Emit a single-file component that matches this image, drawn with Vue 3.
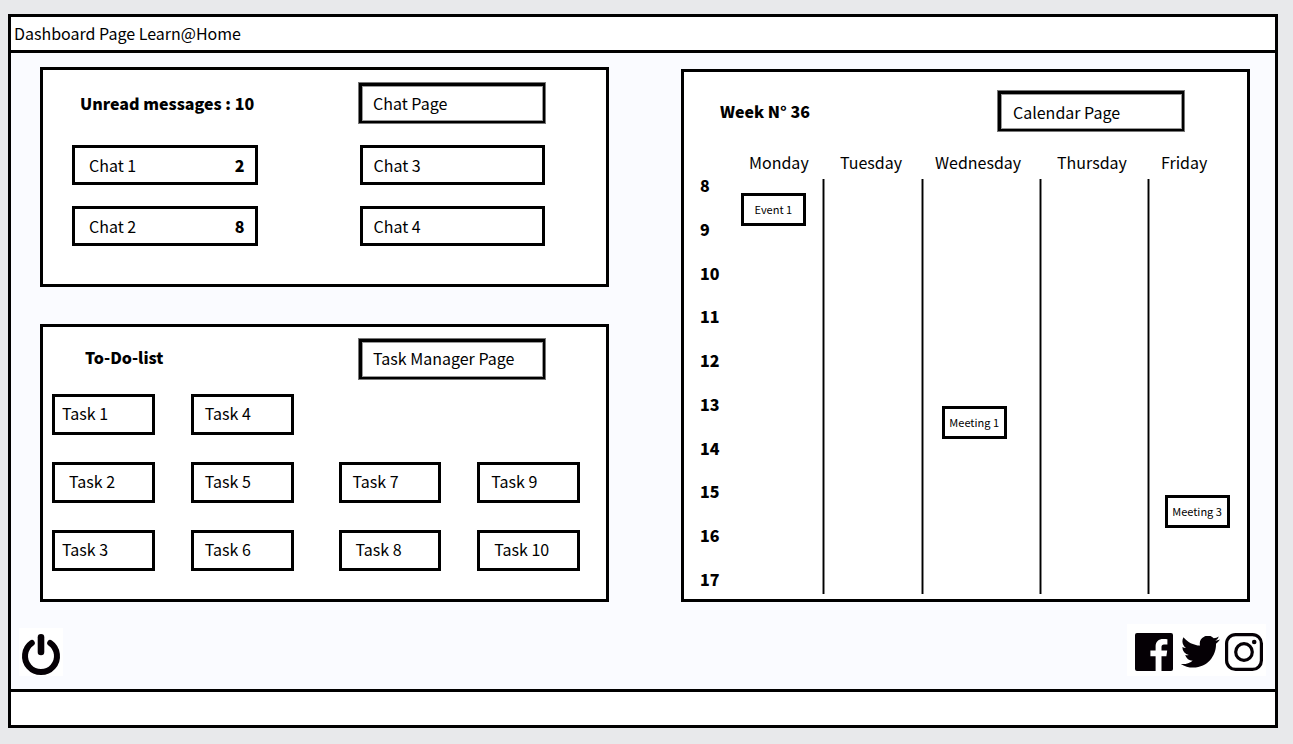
<script setup>
const chats = [
  { name: 'Chat 1', unread: 2 },
  { name: 'Chat 3' },
  { name: 'Chat 2', unread: 8 },
  { name: 'Chat 4' },
]

const taskColumns = [
  [
    { name: 'Task 1', inset: 'near' },
    { name: 'Task 2', inset: 'far' },
    { name: 'Task 3', inset: 'near' },
  ],
  [
    { name: 'Task 4', inset: 'mid' },
    { name: 'Task 5', inset: 'mid' },
    { name: 'Task 6', inset: 'mid' },
  ],
  [
    { name: 'Task 7', inset: 'mid' },
    { name: 'Task 8', inset: 'far' },
  ],
  [
    { name: 'Task 9', inset: 'mid' },
    { name: 'Task 10', inset: 'far' },
  ],
]

const days = ['Monday', 'Tuesday', 'Wednesday', 'Thursday', 'Friday']
const hours = [8, 9, 10, 11, 12, 13, 14, 15, 16, 17]

// start: distance in pixels below the beginning of the hour
const events = [
  { name: 'Event 1', day: 'Monday', hour: 8, start: 14 },
  { name: 'Meeting 1', day: 'Wednesday', hour: 13, start: 8 },
  { name: 'Meeting 3', day: 'Friday', hour: 15, start: 10 },
]

const eventsAt = (day, hour) => events.filter((e) => e.day === day && e.hour === hour)
</script>

<template>
  <div class="page">
    <div class="frame">
      <header class="top-bar">
        <h1>Dashboard Page Learn@Home</h1>
      </header>

      <main class="content">
        <div class="panels">
          <div class="left">
            <section class="panel chat-panel">
              <div class="panel-head">
                <h2>Unread messages : 10</h2>
                <button type="button" class="page-button">Chat Page</button>
              </div>
              <ul class="chats">
                <li v-for="chat in chats" :key="chat.name">
                  <button type="button" class="box chat" :class="{ unread: chat.unread }">
                    <span>{{ chat.name }}</span>
                    <strong v-if="chat.unread">{{ chat.unread }}</strong>
                  </button>
                </li>
              </ul>
            </section>

            <section class="panel todo-panel">
              <div class="panel-head">
                <h2>To-Do-list</h2>
                <button type="button" class="page-button">Task Manager Page</button>
              </div>
              <div class="tasks">
                <ul v-for="(column, i) in taskColumns" :key="i" class="task-column">
                  <li v-for="task in column" :key="task.name">
                    <button type="button" class="box task" :class="task.inset">{{ task.name }}</button>
                  </li>
                </ul>
              </div>
            </section>
          </div>

          <section class="panel calendar-panel">
            <div class="panel-head">
              <h2>Week N° 36</h2>
              <button type="button" class="page-button">Calendar Page</button>
            </div>
            <table class="calendar">
              <colgroup>
                <col class="col-hour" />
                <col class="col-mon" />
                <col class="col-tue" />
                <col class="col-wed" />
                <col class="col-thu" />
                <col class="col-fri" />
              </colgroup>
              <thead>
                <tr>
                  <td></td>
                  <th v-for="day in days" :key="day" scope="col">{{ day }}</th>
                </tr>
              </thead>
              <tbody>
                <tr v-for="hour in hours" :key="hour">
                  <th scope="row">{{ hour }}</th>
                  <td v-for="day in days" :key="day">
                    <button
                      v-for="event in eventsAt(day, hour)"
                      :key="event.name"
                      type="button"
                      class="box event"
                      :style="{ top: event.start + 'px' }"
                    >{{ event.name }}</button>
                  </td>
                </tr>
              </tbody>
            </table>
          </section>
        </div>

        <div class="actions">
          <button type="button" class="power" aria-label="Log out">
            <svg viewBox="0 0 44 48" width="44" height="48" fill="none" stroke="#050005" stroke-linecap="round">
              <path d="M12.8 15 A16 16 0 1 0 31.2 15" stroke-width="6" />
              <path d="M22 9.2 V24" stroke-width="6.6" />
            </svg>
          </button>
          <nav class="social" aria-label="Social networks">
            <a href="#" aria-label="Facebook">
              <svg viewBox="0 0 38 38" width="38" height="38">
                <path
                  fill="#050005"
                  d="M2 0 H36 Q38 0 38 2 V36 Q38 38 36 38 H26.5 V23.2 H31.4 L32.2 17.6 H26.5 V14 C26.5 12.3 27.2 11.4 29 11.4 H32.4 V6.3 C31.4 6.1 30 6 28.2 6 C23.6 6 20.6 8.6 20.6 13.4 V17.6 H15.4 V23.2 H20.6 V38 H2 Q0 38 0 36 V2 Q0 0 2 0 Z"
                />
              </svg>
            </a>
            <a href="#" aria-label="Twitter">
              <svg viewBox="0 2.4 24 19.6" width="42" height="32" preserveAspectRatio="xMaxYMid meet">
                <path
                  fill="#050005"
                  d="M23.95 4.57a10 10 0 0 1-2.82.78 4.96 4.96 0 0 0 2.16-2.72c-.95.55-2 .96-3.13 1.18a4.92 4.92 0 0 0-8.38 4.48C7.69 8.1 4.07 6.13 1.64 3.16a4.82 4.82 0 0 0-.67 2.48c0 1.71.87 3.21 2.19 4.1a4.9 4.9 0 0 1-2.23-.62v.06a4.92 4.92 0 0 0 3.95 4.83 5 5 0 0 1-2.21.08 4.94 4.94 0 0 0 4.6 3.42A9.87 9.87 0 0 1 0 19.54a13.99 13.99 0 0 0 7.55 2.21c9.05 0 14-7.5 14-13.98 0-.21 0-.42-.02-.63a9.94 9.94 0 0 0 2.46-2.55z"
                />
              </svg>
            </a>
            <a href="#" aria-label="Instagram">
              <svg viewBox="0 0 38 38" width="38" height="38" fill="none" stroke="#050005">
                <rect x="1.6" y="1.6" width="34.8" height="34.8" rx="9" stroke-width="3.2" />
                <circle cx="19" cy="19" r="8.3" stroke-width="3.2" />
                <circle cx="29.2" cy="9" r="2.3" fill="#050005" stroke="none" />
              </svg>
            </a>
          </nav>
        </div>
      </main>

      <footer class="bottom-bar"></footer>
    </div>
  </div>
</template>

<style>
body {
  margin: 0;
  background: #e8e9eb;
}
</style>

<style scoped>
.page {
  box-sizing: border-box;
  display: flex;
  min-height: 100vh;
  padding: 14px 15px 16px 8px;
  background: #e8e9eb;
  color: #000;
  font-family: "Noto Sans CJK SC", "Noto Sans", sans-serif;
  font-size: 16px;
  line-height: 24px;
}

.page *,
.page *::before {
  box-sizing: border-box;
}

h1,
h2,
ul {
  margin: 0;
  padding: 0;
  font-size: inherit;
  list-style: none;
}

button {
  margin: 0;
  font: inherit;
  color: inherit;
  text-align: left;
  background: #fff;
  cursor: pointer;
}

.frame {
  flex: 1;
  display: flex;
  flex-direction: column;
  border: 3px solid #000;
}

.top-bar {
  display: flex;
  align-items: center;
  min-height: 36px;
  padding: 0 3px 2px;
  background: #fff;
  border-bottom: 3px solid #000;
}

.top-bar h1 {
  font-weight: 400;
}

.bottom-bar {
  min-height: 36px;
  background: #fff;
  border-top: 3px solid #000;
}

.content {
  flex: 1;
  display: flex;
  flex-direction: column;
  background: #fafbff;
}

.panels {
  display: grid;
  grid-template-columns: 1fr 1fr;
  column-gap: 72px;
  padding: 14px 25px 0 29px;
}

.left {
  display: flex;
  flex-direction: column;
  gap: 37px;
}

.panel {
  background: #fff;
  border: 3px solid #000;
}

.panel-head {
  display: flex;
  justify-content: space-between;
  align-items: center;
}

.panel-head h2 {
  font-weight: 900;
}

.page-button {
  width: 186px;
  height: 40px;
  padding: 0 11px 2px;
  border: 3px solid #000;
  border-width: 3px 2px 2px 3px;
  box-shadow: 0 0 0 1px #777, inset 0 0 0 1px #999;
}

.box {
  border: 3px solid #000;
}

/* chats */
.chat-panel {
  padding: 13px 61px 38px 29px;
}

.chat-panel .panel-head {
  padding-left: 8px;
}

.chats {
  display: grid;
  grid-template-columns: 1fr 1fr;
  gap: 21px 102px;
  margin-top: 22px;
}

.chat {
  display: flex;
  justify-content: space-between;
  align-items: center;
  width: 100%;
  height: 40px;
  padding: 0 11px 1px;
}

.chat.unread {
  padding: 0 10px 1px 14px;
}

.chat strong {
  font-weight: 900;
}

/* tasks */
.todo-panel {
  padding: 12px 26px 28px 9px;
}

.todo-panel .panel-head {
  padding: 0 35px 0 33px;
}

.todo-panel h2,
.todo-panel .page-button {
  padding-bottom: 4px;
}

.tasks {
  display: flex;
  gap: 36px;
  margin-top: 15px;
}

.task-column {
  flex: 1;
  display: flex;
  flex-direction: column;
  justify-content: flex-end;
  gap: 27px;
}

.task-column:nth-child(3) {
  margin-left: 9px;
}

.task {
  display: block;
  width: 100%;
  height: 41px;
}

.near {
  padding: 0 7px 3px;
}

.mid {
  padding: 0 11px 3px;
}

.far {
  padding: 0 14px 3px;
}

/* calendar */
.calendar-panel {
  margin-top: 2px;
  padding: 19px 0 0 13px;
}

.calendar-panel .panel-head {
  padding: 0 63px 0 23px;
}

.calendar-panel .page-button {
  padding: 0 12px;
}

.calendar {
  width: 100%;
  margin-top: 16px;
  table-layout: fixed;
  border-collapse: collapse;
}

.col-hour {
  width: 29px;
}

.col-mon,
.col-tue {
  width: 99px;
}

.col-wed {
  width: 118px;
}

.col-thu {
  width: 108px;
}

.col-fri {
  width: 97px;
}

.calendar th,
.calendar td {
  padding: 0;
  text-align: left;
  vertical-align: top;
}

thead tr {
  height: 32px;
}

.calendar thead th {
  padding-bottom: 2px;
  font-weight: 400;
  vertical-align: middle;
}

.calendar thead th:nth-child(2) {
  padding-left: 23px;
}

.calendar thead th:nth-child(3),
.calendar thead th:nth-child(5) {
  padding-left: 15px;
}

.calendar thead th:nth-child(4),
.calendar thead th:nth-child(6) {
  padding-left: 11px;
}

tbody tr {
  height: 44px;
}

tbody tr:nth-child(4n + 3) {
  height: 43px;
}

tbody tr:last-child {
  height: 21px;
}

.calendar tbody th {
  padding-left: 3px;
  font-weight: 900;
  line-height: 12px;
}

tbody td {
  position: relative;
}

tbody td:not(:last-child) {
  box-shadow: inset -1px 0 #888, inset -2px 0 #000, inset -3px 0 #888;
}

.event {
  position: absolute;
  left: 15%;
  z-index: 1;
  width: 65px;
  height: 33px;
  padding: 0 0 1px;
  font-size: 11px;
  line-height: 16px;
  text-align: center;
}

/* bottom actions */
.actions {
  display: flex;
  justify-content: space-between;
  align-items: flex-end;
  margin-top: auto;
  padding: 0 9px 13px 8px;
}

.power {
  display: flex;
  padding: 0;
  border: 0;
}

.social {
  display: flex;
  align-items: center;
  gap: 5px;
  padding: 9px 3px 5px 8px;
  background: #fff;
}

.social a {
  display: flex;
}
</style>
